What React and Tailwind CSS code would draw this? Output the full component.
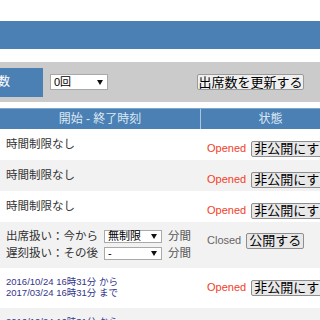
const font = "font-['Liberation_Sans','Noto_Sans_CJK_JP',sans-serif]"

function Caret() {
    return (
        <svg width="6" height="5" viewBox="0 0 6 5" className="shrink-0">
            <path d="M0 0H6L3 5Z" fill="#111" />
        </svg>
    )
}

function FakeSelect({ children, className }) {
    return (
        <div className={`flex items-center justify-between border border-[#a9a9a9] bg-white pl-[3px] pr-[4px] ${className}`}>
            <span className="text-[11px] leading-none text-black">{children}</span>
            <Caret />
        </div>
    )
}

function GrayButton({ children }) {
    return (
        <span className="inline-flex h-[16px] shrink-0 items-center whitespace-nowrap rounded-[2px] border border-[#8e8e8e] bg-[#e8e8e8] px-[2px] text-[13px] leading-none text-black">
            {children}
        </span>
    )
}

function Status({ open }) {
    return (
        <div className="flex items-center">
            {open ? (
                <span className="text-[11px] leading-[16px] text-[#f2401f]">Opened</span>
            ) : (
                <span className="text-[11px] leading-[16px] text-[#666]">Closed</span>
            )}
            <span className="ml-[5px]">
                <GrayButton>{open ? '非公開にする' : '公開する'}</GrayButton>
            </span>
        </div>
    )
}

function Row({ shaded, height, top = 'pt-[7px]', left, right }) {
    return (
        <div className={`flex ${height} ${shaded ? 'bg-[#f2f2f2]' : 'bg-white'}`}>
            <div className={`w-[200px] shrink-0 pl-[6px] ${top}`}>{left}</div>
            <div className={`w-[140px] shrink-0 pl-[7px] ${top}`}>{right}</div>
        </div>
    )
}

const plain = <div className="text-[11.5px] leading-[16px] text-[#333]">時間制限なし</div>

const dates = (
    <div className="text-[9.5px] leading-[11px] text-[#35358a]">
        <div>2016/10/24 16時31分 から</div>
        <div>2017/03/24 16時31分 まで</div>
    </div>
)

export default function App() {
    return (
        <div className={`h-[320px] w-[320px] overflow-hidden bg-white ${font}`}>
            <div className="h-[21px]" />
            <div className="h-[28px] bg-[#4a80b4]" />
            <div className="h-[13px]" />

            <div className="flex h-[40px] items-center bg-[#cbcbcb]">
                <div className="flex h-[29px] w-[43px] items-center bg-[#4a80b4] text-[12px] text-white">
                    <span className="-ml-[2px]">数</span>
                </div>
                <FakeSelect className="ml-[7px] h-[16px] w-[58px]">0回</FakeSelect>
                <span className="ml-[89px] inline-flex h-[16px] w-[107px] items-center justify-center rounded-[2px] border border-[#9a9a9a] bg-[#f0f0f0] text-[13px] leading-none text-black">
                    出席数を更新する
                </span>
            </div>

            <div className="h-[6px]" />

            <div className="w-[340px]">
                <div className="flex h-[21px] border-t border-[#7fa6cc] bg-[#4a80b4] text-[12px] leading-[20px] text-[#dde8f3]">
                    <div className="w-[200px] shrink-0 text-center">開始 - 終了時刻</div>
                    <div className="w-[140px] shrink-0 border-l border-[#a9c4de] text-center">状態</div>
                </div>

                <Row height="h-[31px]" left={plain} right={<Status open />} />
                <Row shaded height="h-[31px]" left={plain} right={<Status open />} />
                <Row height="h-[31px]" left={plain} right={<Status open />} />
                <Row
                    shaded
                    height="h-[46px]"
                    top="pt-[6px]"
                    left={
                        <div className="text-[11.5px] text-[#333]">
                            <div className="flex h-[17px] items-center">
                                <span className="w-[92px] whitespace-nowrap">出席扱い：今から</span>
                                <FakeSelect className="ml-[6px] h-[13px] w-[58px]">無制限</FakeSelect>
                                <span className="ml-[6px] text-[#555]">分間</span>
                            </div>
                            <div className="flex h-[17px] items-center">
                                <span className="w-[92px] whitespace-nowrap">遅刻扱い：その後</span>
                                <FakeSelect className="ml-[6px] h-[13px] w-[58px]">-</FakeSelect>
                                <span className="ml-[6px] text-[#555]">分間</span>
                            </div>
                        </div>
                    }
                    right={<Status open={false} />}
                />
                <Row height="h-[40px]" left={<div className="pt-[1px]">{dates}</div>} right={<Status open />} />
                <Row shaded height="h-[40px]" left={<div className="pt-[1px]">{dates}</div>} right={<Status open />} />
            </div>
        </div>
    )
}
